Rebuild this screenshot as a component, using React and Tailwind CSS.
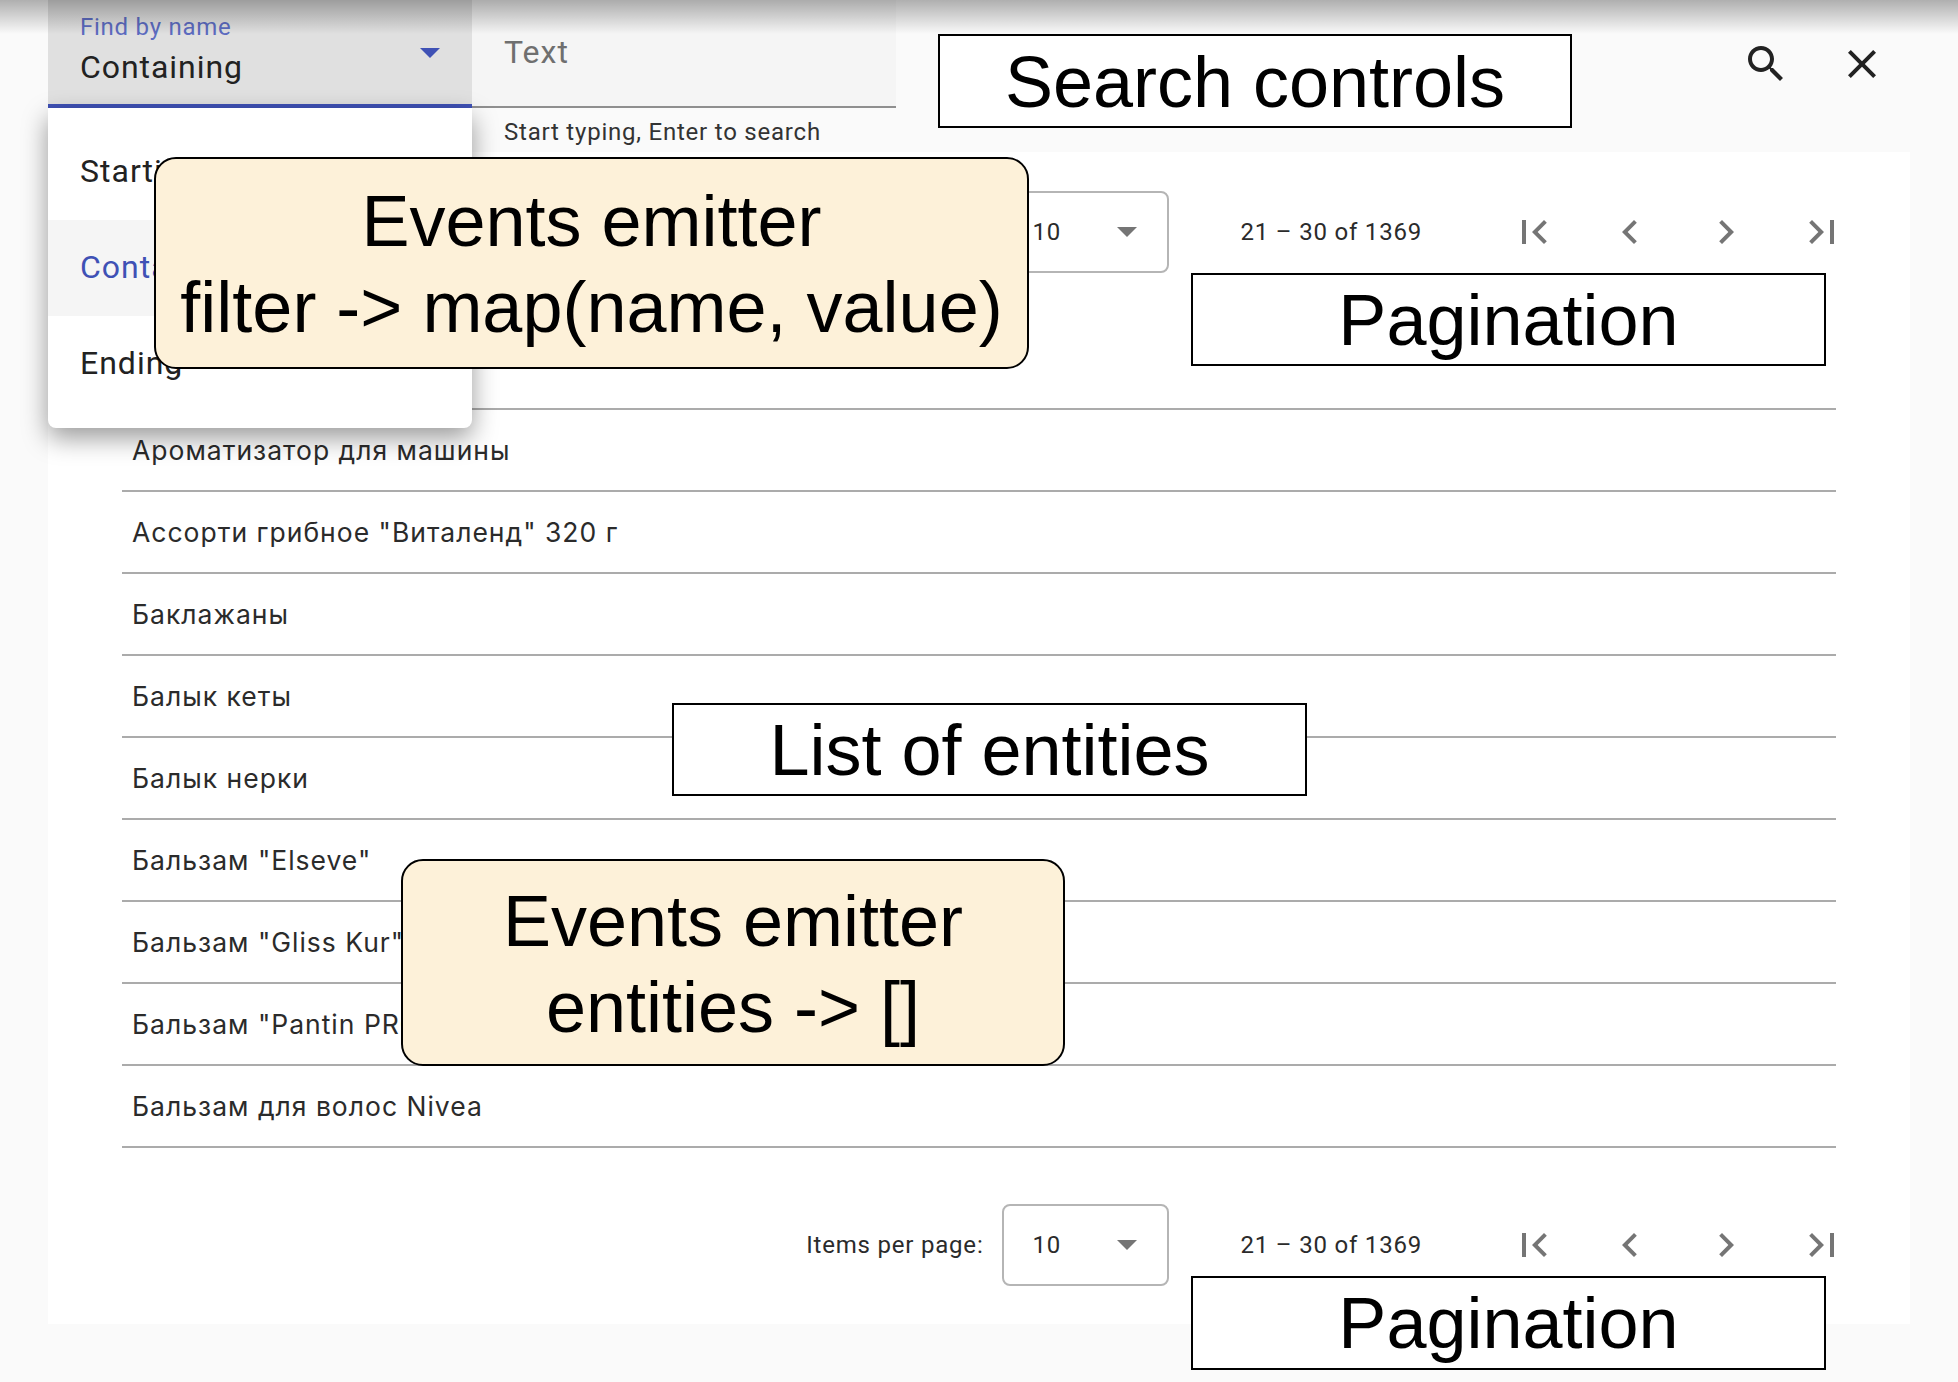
const ROWS = [
  "",
  "Ароматизатор для машины",
  'Ассорти грибное "Виталенд" 320 г',
  "Баклажаны",
  "Балык кеты",
  "Балык нерки",
  'Бальзам "Elseve"',
  'Бальзам "Gliss Kur"',
  'Бальзам "Pantin PRO-V"',
  "Бальзам для волос Nivea",
];

const MENU_ITEMS = ["Starting", "Containing", "Ending"];

function MaterialIcon({ d, className = "" }) {
  return (
    <svg viewBox="0 0 24 24" className={`h-12 w-12 fill-current ${className}`}>
      <path d={d} />
    </svg>
  );
}

const ICONS = {
  first: "M18.41 16.59L13.82 12l4.59-4.59L17 6l-6 6 6 6zM6 6h2v12H6z",
  prev: "M15.41 7.41L14 6l-6 6 6 6 1.41-1.41L10.83 12z",
  next: "M10 6L8.59 7.41 13.17 12l-4.58 4.59L10 18l6-6z",
  last: "M5.59 7.41L10.18 12l-4.59 4.59L7 18l6-6-6-6zM16 6h2v12h-2z",
  search:
    "M15.5 14h-.79l-.28-.27C15.41 12.59 16 11.11 16 9.5 16 5.91 13.09 3 9.5 3S3 5.91 3 9.5 5.91 16 9.5 16c1.61 0 3.09-.59 4.23-1.57l.27.28v.79l5 4.99L20.49 19l-4.99-5zm-6 0C7.01 14 5 11.99 5 9.5S7.01 5 9.5 5 14 7.01 14 9.5 11.99 14 9.5 14z",
  close:
    "M19 6.41L17.59 5 12 10.59 6.41 5 5 6.41 10.59 12 5 17.59 6.41 19 12 13.41 17.59 19 19 17.59 13.41 12z",
};

function Paginator() {
  return (
    <div className="flex h-[82px] items-center justify-end pr-[40px] text-[24px] tracking-[0.8px] text-[#2b2b2b]">
      <span className="mr-[18px]">Items per page:</span>
      <div className="flex h-[82px] w-[167px] items-center justify-between rounded-lg border-2 border-[#b5b5b5] pl-[29px] pr-[30px]">
        <span>10</span>
        <span className="h-0 w-0 border-x-[10px] border-t-[10px] border-x-transparent border-t-[#757575]" />
      </div>
      <span className="ml-[72px] mr-[64px]">21 – 30 of 1369</span>
      <div className="flex text-[#757575]">
        {[ICONS.first, ICONS.prev, ICONS.next, ICONS.last].map((d) => (
          <span key={d} className="flex h-24 w-24 items-center justify-center">
            <MaterialIcon d={d} />
          </span>
        ))}
      </div>
    </div>
  );
}

function Note({ children, className = "" }) {
  return (
    <div
      className={`absolute flex items-center justify-center border-2 border-black bg-white text-[72px] leading-none text-black [font-family:'Liberation_Sans',Arial,sans-serif] ${className}`}
    >
      {children}
    </div>
  );
}

function Bubble({ lines, className = "" }) {
  return (
    <div
      className={`absolute flex flex-col items-center justify-center rounded-[22px] border-2 border-black bg-[#fdf1d9] text-[72px] leading-[86px] text-black [font-family:'Liberation_Sans',Arial,sans-serif] ${className}`}
    >
      {lines.map((line) => (
        <span key={line}>{line}</span>
      ))}
    </div>
  );
}

export default function App() {
  return (
    <div className="relative h-[1382px] w-[1958px] overflow-hidden bg-[#fafafa] [font-family:Roboto,'Noto_Sans',sans-serif]">
      <div className="flex h-[152px] items-start pl-12">
        <div className="relative h-[108px] w-[424px] border-b-4 border-[#3f51b5] bg-[#e0e0e0] pl-8">
          <div className="pt-[12px] text-[24px] leading-[30px] tracking-[0.75px] text-[#5c6bc0]">Find by name</div>
          <div className="mt-[6px] text-[32px] leading-[38px] tracking-[0.95px] text-[#222222]">Containing</div>
          <span className="absolute left-[372px] top-[48px] h-0 w-0 border-x-[10px] border-t-[10px] border-x-transparent border-t-[#3f51b5]" />
        </div>
        <div className="w-[424px]">
          <div className="h-[108px] border-b-2 border-[#8f8f8f] bg-[#f5f5f5] pl-8 pt-[32px] text-[32px] leading-[40px] tracking-[1px] text-[#6f6f6f]">
            Text
          </div>
          <div className="pl-8 pt-[9px] text-[24px] leading-[30px] tracking-[0.78px] text-[#333333]">
            Start typing, Enter to search
          </div>
        </div>
        <div className="ml-auto mr-[48px] flex pt-[16px] text-[#222222]">
          <span className="flex h-24 w-24 items-center justify-center">
            <MaterialIcon d={ICONS.search} />
          </span>
          <span className="flex h-24 w-24 items-center justify-center">
            <MaterialIcon d={ICONS.close} />
          </span>
        </div>
      </div>

      <main className="mx-12 h-[1172px] bg-white pt-[39px]">
        <Paginator />
        <div className="mx-[74px] mb-[56px] mt-[55px]">
          {ROWS.map((row, i) => (
            <div
              key={i}
              className="flex h-[82px] items-center border-b-2 border-[#ababab] pl-[10px] pt-[2px] text-[26.5px] tracking-[1px] text-[#2b2b2b] [font-family:Inter,Roboto,sans-serif]"
            >
              {row}
            </div>
          ))}
        </div>
        <Paginator />
      </main>

      {/* dropdown opened from the search mode select */}
      <div className="absolute left-12 top-[108px] w-[424px] rounded-b-lg bg-white py-4 text-[32px] tracking-[1px] text-[#222222] shadow-[0_10px_26px_rgba(0,0,0,0.4)]">
        {MENU_ITEMS.map((item) => (
          <div
            key={item}
            className={`flex h-24 items-center pb-[2px] pl-8 ${item === "Containing" ? "bg-[#f5f5f5] text-[#3f51b5]" : ""}`}
          >
            {item}
          </div>
        ))}
      </div>

      <div className="pointer-events-none absolute inset-x-0 top-0 h-[34px] bg-gradient-to-b from-black/30 to-transparent" />

      <Note className="left-[938px] top-[34px] h-[94px] w-[634px] pt-[2px]">Search controls</Note>
      <Note className="left-[1191px] top-[273px] h-[93px] w-[635px]">Pagination</Note>
      <Note className="left-[672px] top-[703px] h-[93px] w-[635px]">List of entities</Note>
      <Note className="left-[1191px] top-[1276px] h-[94px] w-[635px]">Pagination</Note>

      <Bubble lines={["Events emitter", "filter -> map(name, value)"]} className="left-[154px] top-[157px] h-[212px] w-[875px] pt-[2px]" />
      <Bubble lines={["Events emitter", "entities -> []"]} className="left-[401px] top-[859px] h-[207px] w-[664px] pt-[2px]" />
    </div>
  );
}
